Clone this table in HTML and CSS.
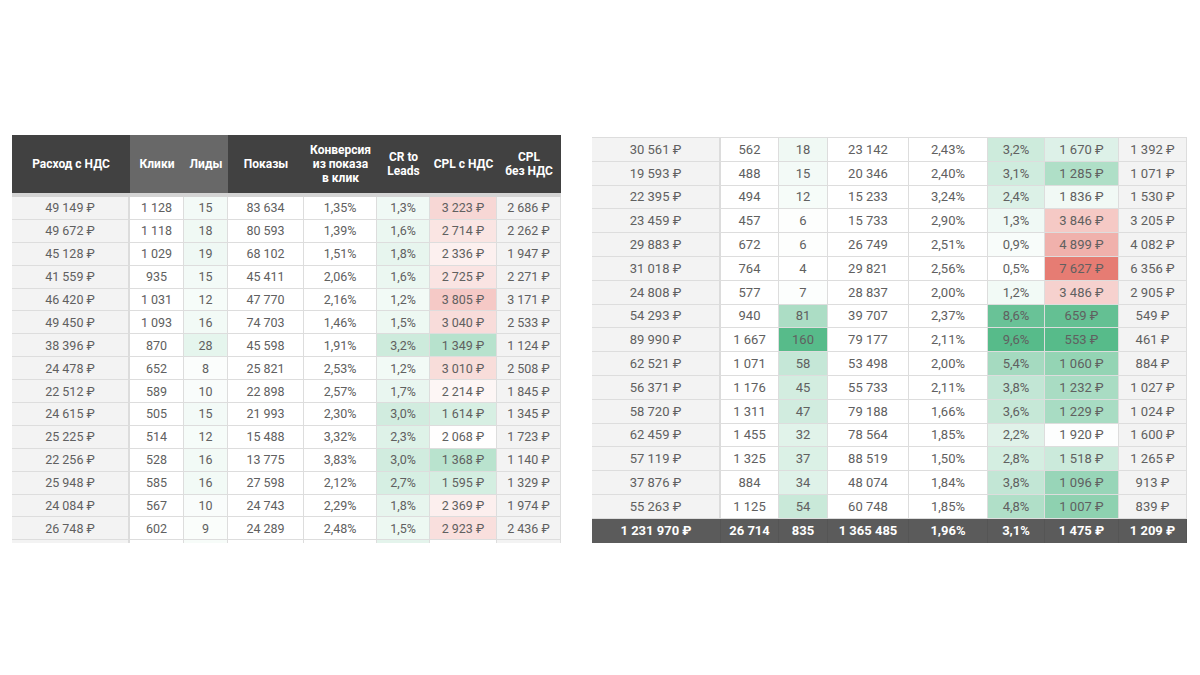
FILE: index.html
```html
<!DOCTYPE html>
<html lang="ru">
<head>
<meta charset="utf-8">
<title>Отчёт</title>
<link rel="stylesheet" href="styles.css">
</head>
<body>
<div class="page">
  <table class="sheet sheet-left">
    <colgroup>
      <col class="w-a"><col class="w-b"><col class="w-c"><col class="w-d"><col class="w-e"><col class="w-f"><col class="w-g"><col class="w-h">
    </colgroup>
    <thead>
      <tr>
        <th>Расход с НДС</th>
        <th class="hl">Клики</th>
        <th class="hl">Лиды</th>
        <th>Показы</th>
        <th>Конверсия<br>из показа<br>в клик</th>
        <th>CR to<br>Leads</th>
        <th>CPL с НДС</th>
        <th>CPL<br>без НДС</th>
      </tr>
    </thead>
    <tbody>
      <tr><td class="f">49 149 ₽</td><td>1 128</td><td class="g" style="--p:7.1">15</td><td>83 634</td><td>1,35%</td><td class="g" style="--p:8.8">1,3%</td><td class="r" style="--p:30.2">3 223 ₽</td><td class="f">2 686 ₽</td></tr>
      <tr><td class="f">49 672 ₽</td><td>1 118</td><td class="g" style="--p:9">18</td><td>80 593</td><td>1,39%</td><td class="g" style="--p:12.1">1,6%</td><td class="r" style="--p:20.1">2 714 ₽</td><td class="f">2 262 ₽</td></tr>
      <tr><td class="f">45 128 ₽</td><td>1 029</td><td class="g" style="--p:9.6">19</td><td>68 102</td><td>1,51%</td><td class="g" style="--p:14.3">1,8%</td><td class="r" style="--p:11.6">2 336 ₽</td><td class="f">1 947 ₽</td></tr>
      <tr><td class="f">41 559 ₽</td><td>935</td><td class="g" style="--p:7.1">15</td><td>45 411</td><td>2,06%</td><td class="g" style="--p:12.1">1,6%</td><td class="r" style="--p:20.3">2 725 ₽</td><td class="f">2 271 ₽</td></tr>
      <tr><td class="f">46 420 ₽</td><td>1 031</td><td class="g" style="--p:5.1">12</td><td>47 770</td><td>2,16%</td><td class="g" style="--p:7.7">1,2%</td><td class="r" style="--p:40.9">3 805 ₽</td><td class="f">3 171 ₽</td></tr>
      <tr><td class="f">49 450 ₽</td><td>1 093</td><td class="g" style="--p:7.7">16</td><td>74 703</td><td>1,46%</td><td class="g" style="--p:11">1,5%</td><td class="r" style="--p:26.7">3 040 ₽</td><td class="f">2 533 ₽</td></tr>
      <tr><td class="f">38 396 ₽</td><td>870</td><td class="g" style="--p:15.4">28</td><td>45 598</td><td>1,91%</td><td class="g" style="--p:29.7">3,2%</td><td class="g" style="--p:43">1 349 ₽</td><td class="f">1 124 ₽</td></tr>
      <tr><td class="f">24 478 ₽</td><td>652</td><td class="g" style="--p:2.6">8</td><td>25 821</td><td>2,53%</td><td class="g" style="--p:7.7">1,2%</td><td class="r" style="--p:26.1">3 010 ₽</td><td class="f">2 508 ₽</td></tr>
      <tr><td class="f">22 512 ₽</td><td>589</td><td class="g" style="--p:3.8">10</td><td>22 898</td><td>2,57%</td><td class="g" style="--p:13.2">1,7%</td><td class="r" style="--p:7">2 214 ₽</td><td class="f">1 845 ₽</td></tr>
      <tr><td class="f">24 615 ₽</td><td>505</td><td class="g" style="--p:7.1">15</td><td>21 993</td><td>2,30%</td><td class="g" style="--p:27.5">3,0%</td><td class="g" style="--p:24.1">1 614 ₽</td><td class="f">1 345 ₽</td></tr>
      <tr><td class="f">25 225 ₽</td><td>514</td><td class="g" style="--p:5.1">12</td><td>15 488</td><td>3,32%</td><td class="g" style="--p:19.8">2,3%</td><td class="r" style="--p:1">2 068 ₽</td><td class="f">1 723 ₽</td></tr>
      <tr><td class="f">22 256 ₽</td><td>528</td><td class="g" style="--p:7.7">16</td><td>13 775</td><td>3,83%</td><td class="g" style="--p:27.5">3,0%</td><td class="g" style="--p:41.7">1 368 ₽</td><td class="f">1 140 ₽</td></tr>
      <tr><td class="f">25 948 ₽</td><td>585</td><td class="g" style="--p:7.7">16</td><td>27 598</td><td>2,12%</td><td class="g" style="--p:24.2">2,7%</td><td class="g" style="--p:25.4">1 595 ₽</td><td class="f">1 329 ₽</td></tr>
      <tr><td class="f">24 084 ₽</td><td>567</td><td class="g" style="--p:3.8">10</td><td>24 743</td><td>2,29%</td><td class="g" style="--p:14.3">1,8%</td><td class="r" style="--p:12.4">2 369 ₽</td><td class="f">1 974 ₽</td></tr>
      <tr><td class="f">26 748 ₽</td><td>602</td><td class="g" style="--p:3.2">9</td><td>24 289</td><td>2,48%</td><td class="g" style="--p:11">1,5%</td><td class="r" style="--p:24.4">2 923 ₽</td><td class="f">2 436 ₽</td></tr>
      <tr class="cut"><td class="f"></td><td></td><td class="g" style="--p:5"></td><td></td><td></td><td class="g" style="--p:16"></td><td></td><td class="f"></td></tr>
    </tbody>
  </table>

  <table class="sheet sheet-right">
    <colgroup>
      <col class="v-a"><col class="v-b"><col class="v-c"><col class="v-d"><col class="v-e"><col class="v-f"><col class="v-g"><col class="v-h">
    </colgroup>
    <tbody>
      <tr><td class="f">30 561 ₽</td><td>562</td><td class="g" style="--p:9">18</td><td>23 142</td><td>2,43%</td><td class="g" style="--p:29.7">3,2%</td><td class="g" style="--p:20">1 670 ₽</td><td class="f">1 392 ₽</td></tr>
      <tr><td class="f">19 593 ₽</td><td>488</td><td class="g" style="--p:7.1">15</td><td>20 346</td><td>2,40%</td><td class="g" style="--p:28.6">3,1%</td><td class="g" style="--p:47.6">1 285 ₽</td><td class="f">1 071 ₽</td></tr>
      <tr><td class="f">22 395 ₽</td><td>494</td><td class="g" style="--p:5.1">12</td><td>15 233</td><td>3,24%</td><td class="g" style="--p:20.9">2,4%</td><td class="g" style="--p:8.2">1 836 ₽</td><td class="f">1 530 ₽</td></tr>
      <tr><td class="f">23 459 ₽</td><td>457</td><td class="g" style="--p:1.3">6</td><td>15 733</td><td>2,90%</td><td class="g" style="--p:8.8">1,3%</td><td class="r" style="--p:41.6">3 846 ₽</td><td class="f">3 205 ₽</td></tr>
      <tr><td class="f">29 883 ₽</td><td>672</td><td class="g" style="--p:1.3">6</td><td>26 749</td><td>2,51%</td><td class="g" style="--p:4.4">0,9%</td><td class="r" style="--p:59.2">4 899 ₽</td><td class="f">4 082 ₽</td></tr>
      <tr><td class="f">31 018 ₽</td><td>764</td><td class="g" style="--p:0">4</td><td>29 821</td><td>2,56%</td><td class="g" style="--p:0">0,5%</td><td class="r" style="--p:100">7 627 ₽</td><td class="f">6 356 ₽</td></tr>
      <tr><td class="f">24 808 ₽</td><td>577</td><td class="g" style="--p:1.9">7</td><td>28 837</td><td>2,00%</td><td class="g" style="--p:7.7">1,2%</td><td class="r" style="--p:35.1">3 486 ₽</td><td class="f">2 905 ₽</td></tr>
      <tr><td class="f">54 293 ₽</td><td>940</td><td class="g" style="--p:49.4">81</td><td>39 707</td><td>2,37%</td><td class="g" style="--p:89">8,6%</td><td class="g" style="--p:92.4">659 ₽</td><td class="f">549 ₽</td></tr>
      <tr><td class="f">89 990 ₽</td><td>1 667</td><td class="g" style="--p:100">160</td><td>79 177</td><td>2,11%</td><td class="g" style="--p:100">9,6%</td><td class="g" style="--p:100">553 ₽</td><td class="f">461 ₽</td></tr>
      <tr><td class="f">62 521 ₽</td><td>1 071</td><td class="g" style="--p:34.6">58</td><td>53 498</td><td>2,00%</td><td class="g" style="--p:53.8">5,4%</td><td class="g" style="--p:63.7">1 060 ₽</td><td class="f">884 ₽</td></tr>
      <tr><td class="f">56 371 ₽</td><td>1 176</td><td class="g" style="--p:26.3">45</td><td>55 733</td><td>2,11%</td><td class="g" style="--p:36.3">3,8%</td><td class="g" style="--p:51.4">1 232 ₽</td><td class="f">1 027 ₽</td></tr>
      <tr><td class="f">58 720 ₽</td><td>1 311</td><td class="g" style="--p:27.6">47</td><td>79 188</td><td>1,66%</td><td class="g" style="--p:34.1">3,6%</td><td class="g" style="--p:51.6">1 229 ₽</td><td class="f">1 024 ₽</td></tr>
      <tr><td class="f">62 459 ₽</td><td>1 455</td><td class="g" style="--p:17.9">32</td><td>78 564</td><td>1,85%</td><td class="g" style="--p:18.7">2,2%</td><td class="g" style="--p:1">1 920 ₽</td><td class="f">1 600 ₽</td></tr>
      <tr><td class="f">57 119 ₽</td><td>1 325</td><td class="g" style="--p:21.2">37</td><td>88 519</td><td>1,50%</td><td class="g" style="--p:25.3">2,8%</td><td class="g" style="--p:30.9">1 518 ₽</td><td class="f">1 265 ₽</td></tr>
      <tr><td class="f">37 876 ₽</td><td>884</td><td class="g" style="--p:19.2">34</td><td>48 074</td><td>1,84%</td><td class="g" style="--p:36.3">3,8%</td><td class="g" style="--p:61.1">1 096 ₽</td><td class="f">913 ₽</td></tr>
      <tr><td class="f">55 263 ₽</td><td>1 125</td><td class="g" style="--p:32.1">54</td><td>60 748</td><td>1,85%</td><td class="g" style="--p:47.3">4,8%</td><td class="g" style="--p:67.5">1 007 ₽</td><td class="f">839 ₽</td></tr>
      <tr class="total"><td>1 231 970 ₽</td><td>26 714</td><td>835</td><td>1 365 485</td><td>1,96%</td><td>3,1%</td><td>1 475 ₽</td><td>1 209 ₽</td></tr>
    </tbody>
  </table>
</div>
</body>
</html>
```

FILE: styles.css
```css
html, body {
  margin: 0;
  padding: 0;
  background: #ffffff;
}

body {
  font-family: Roboto, "Liberation Sans", "DejaVu Sans", Arial, sans-serif;
}

.page {
  display: flex;
  align-items: flex-start;
  gap: 31px;
  padding: 135px 0 0 12px;
}

.sheet {
  border-collapse: separate;
  border-spacing: 0;
  table-layout: fixed;
}

.sheet td {
  padding: 0;
  text-align: center;
  vertical-align: middle;
  white-space: nowrap;
  color: #606060;
  border-right: 1px solid #dddddd;
  border-bottom: 1px solid #dddddd;
  overflow: hidden;
}

.sheet td:first-child {
  border-right: 2px solid #dcdcdc;
}

.sheet th {
  height: 58px;
  padding: 0 2px;
  background: #414141;
  color: #ffffff;
  font-size: 12px;
  font-weight: 700;
  line-height: 14px;
  text-align: center;
  vertical-align: middle;
  border-bottom: 4px solid #d4d4d4;
  white-space: nowrap;
}

.sheet th.hl {
  background: #686868;
}

/* left table */
.sheet-left {
  width: 549px;
}
.w-a { width: 118px; }
.w-b { width: 54px; }
.w-c { width: 44px; }
.w-d { width: 76px; }
.w-e { width: 73px; }
.w-f { width: 53px; }
.w-g { width: 67px; }
.w-h { width: 64px; }

.sheet-left td {
  font-size: 12.5px;
}
.sheet-left tbody tr {
  height: 22.9px;
}
.sheet-left tr.cut {
  height: 3px;
}
.sheet-left tr.cut td {
  border-bottom: none;
  height: 3px;
  line-height: 0;
}

/* right table */
.sheet-right {
  width: 595px;
  margin-top: 2px;
  border-top: 1px solid #dddddd;
}
.v-a { width: 129px; }
.v-b { width: 58px; }
.v-c { width: 49px; }
.v-d { width: 81px; }
.v-e { width: 79px; }
.v-f { width: 57px; }
.v-g { width: 74px; }
.v-h { width: 68px; }

.sheet-right td {
  font-size: 13px;
}
.sheet-right tbody tr {
  height: 23.8px;
}

/* grey side columns */
.sheet td.f {
  background: #f3f3f3;
}

/* colour scales (value passed as --p, 0..100) */
.sheet td.g {
  background: rgb(calc(255 - var(--p) * 1.68), calc(255 - var(--p) * 0.68), calc(255 - var(--p) * 1.17));
}
.sheet td.r {
  background: rgb(calc(255 - var(--p) * 0.25), calc(255 - var(--p) * 1.31), calc(255 - var(--p) * 1.40));
}

/* totals */
.sheet tr.total td {
  background: #5b5b5b;
  color: #ffffff;
  font-weight: 700;
  border-right: 1px solid #555555;
  border-bottom: none;
}
```
